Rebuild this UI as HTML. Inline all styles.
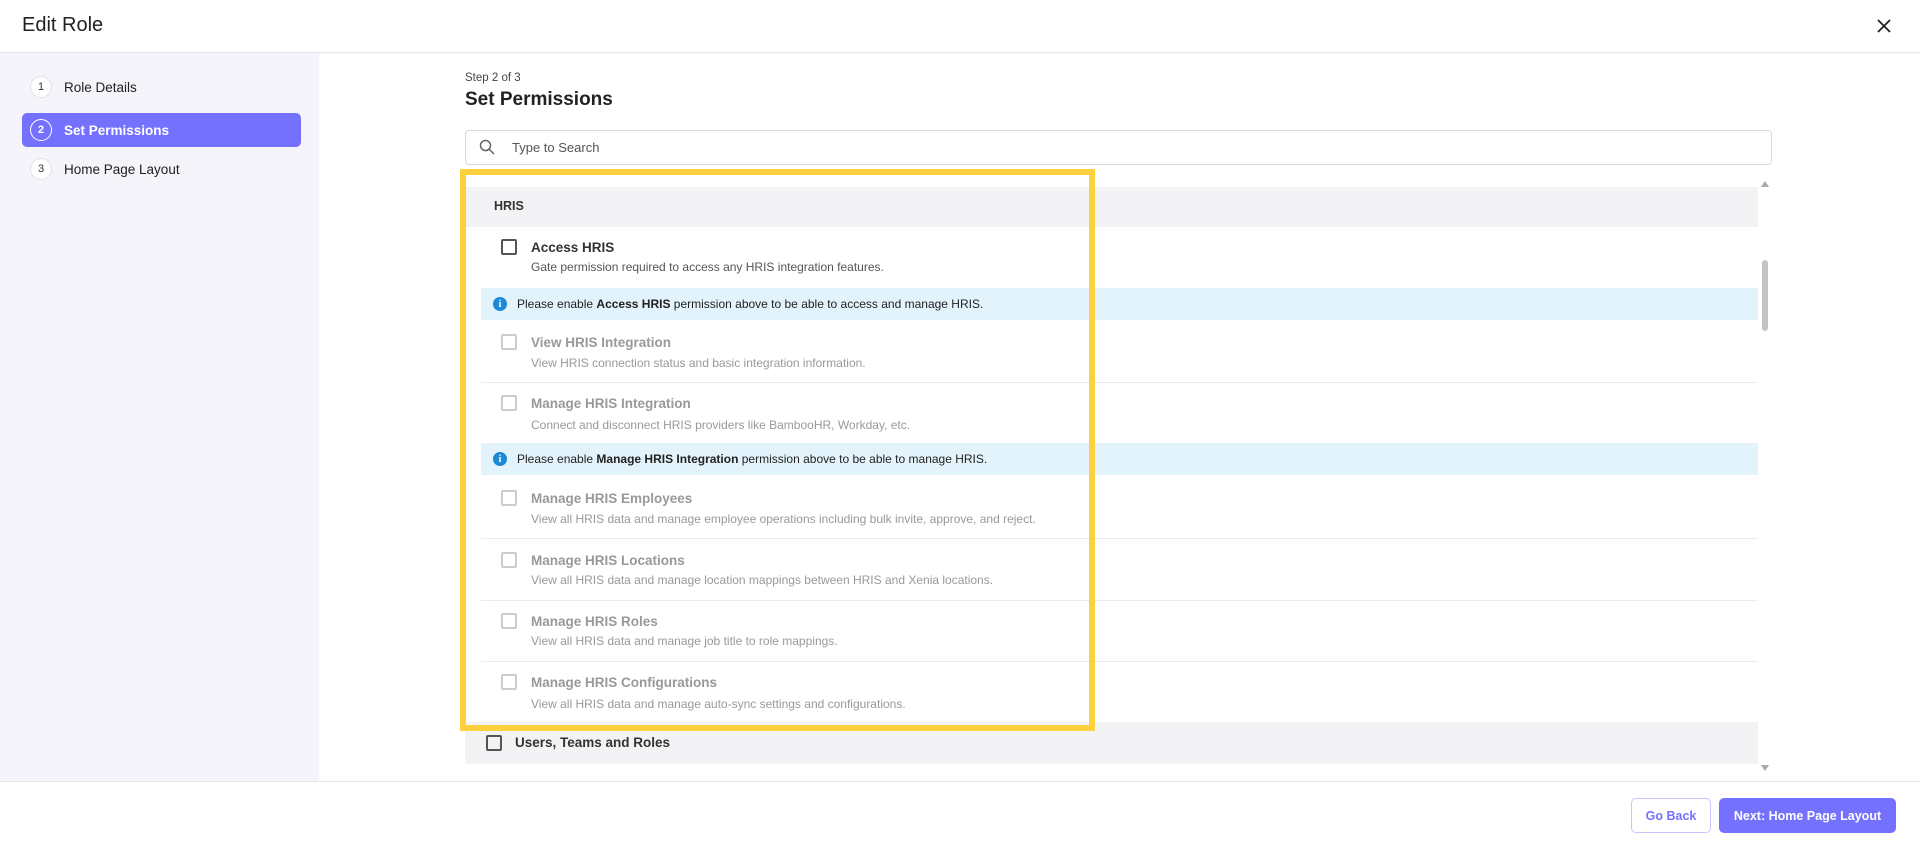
<!DOCTYPE html>
<html><head><meta charset="utf-8"><style>
*{box-sizing:border-box;margin:0;padding:0}
body{width:1920px;height:848px;overflow:hidden;background:#fff;font-family:"Liberation Sans",sans-serif;color:#212121;position:relative}
.abs{position:absolute}
.hdr{left:0;top:0;width:1920px;height:53px;border-bottom:1px solid #e6e6ea}
.side{left:0;top:53px;width:319px;height:728px;background:#f4f4fa}
.step{position:absolute;left:22px;width:279px;height:34px;display:flex;align-items:center;font-size:13.5px}
.num{width:22px;height:22px;border-radius:50%;background:#fff;border:1px solid #e0e0e6;font-size:11px;display:flex;align-items:center;justify-content:center;margin:0 12px 0 8px;color:#333}
.act{background:#7571ff;color:#fff;border-radius:5px;font-weight:bold}
.act .num{background:transparent;border:1.5px solid #fff;color:#fff;font-weight:bold}
.row{position:absolute;left:465px;width:1293px}
.cb{position:absolute;left:36px;width:16px;height:16px;border:2px solid #555;border-radius:2px}
.dis .cb{border-color:#ccc}
.t{position:absolute;left:66px;font-size:13.5px;font-weight:bold;color:#333}
.d{position:absolute;left:66px;font-size:12px;color:#555}
.dis .t{color:#999}.dis .d{color:#999}
.info{position:absolute;left:481px;width:1277px;height:32px;background:#e3f3fb;font-size:12px;display:flex;align-items:center;color:#222}
.ic{width:14px;height:14px;border-radius:50%;background:#1b8ad6;color:#fff;font-size:10px;font-weight:bold;display:flex;align-items:center;justify-content:center;margin:0 10px 0 12px;font-family:"Liberation Serif",serif}
.div{position:absolute;left:481px;width:1277px;height:1px;background:#ececf0}
</style></head><body>
<div class="abs hdr"></div>
<div class="abs" style="left:22px;top:14px;font-size:20px;color:#222">Edit Role</div>
<svg class="abs" style="left:1877px;top:19px" width="14" height="14" viewBox="0 0 14 14"><path d="M1 1L13 13M13 1L1 13" stroke="#222" stroke-width="1.8"/></svg>
<div class="abs side"></div>
<div class="step" style="top:70px"><span class="num">1</span>Role Details</div>
<div class="step act" style="top:113px"><span class="num">2</span>Set Permissions</div>
<div class="step" style="top:152px"><span class="num">3</span>Home Page Layout</div>

<div class="abs" style="left:465px;top:72px;font-size:11.5px;color:#444">Step 2 of 3</div>
<div class="abs" style="left:465px;top:89px;font-size:19px;font-weight:bold;color:#222">Set Permissions</div>
<div class="abs" style="left:465px;top:130px;width:1307px;height:35px;border:1px solid #d6d6dc;border-radius:4px"></div>
<svg class="abs" style="left:479px;top:139px" width="16" height="16" viewBox="0 0 16 16"><circle cx="6.5" cy="6.5" r="5" fill="none" stroke="#666" stroke-width="1.5"/><path d="M10.2 10.2L15 15" stroke="#666" stroke-width="1.5"/></svg>
<div class="abs" style="left:512px;top:140px;font-size:13px;color:#555">Type to Search</div>

<div class="abs" style="left:465px;top:187px;width:1293px;height:40px;background:#f3f3f6"></div>
<div class="abs" style="left:494px;top:199px;font-size:12.5px;font-weight:bold;color:#333">HRIS</div>

<div class="row" style="top:0"><div class="cb" style="top:239px"></div><div class="t" style="top:240px">Access HRIS</div><div class="d" style="top:260px">Gate permission required to access any HRIS integration features.</div></div>
<div class="info" style="top:288px"><span class="ic">i</span>Please enable&nbsp;<b>Access HRIS</b>&nbsp;permission above to be able to access and manage HRIS.</div>
<div class="row dis"><div class="cb" style="top:334px"></div><div class="t" style="top:335px">View HRIS Integration</div><div class="d" style="top:356px">View HRIS connection status and basic integration information.</div></div>
<div class="div" style="top:382px"></div>
<div class="row dis"><div class="cb" style="top:395px"></div><div class="t" style="top:396px">Manage HRIS Integration</div><div class="d" style="top:418px">Connect and disconnect HRIS providers like BambooHR, Workday, etc.</div></div>
<div class="info" style="top:443px"><span class="ic">i</span>Please enable&nbsp;<b>Manage HRIS Integration</b>&nbsp;permission above to be able to manage HRIS.</div>
<div class="row dis"><div class="cb" style="top:490px"></div><div class="t" style="top:491px">Manage HRIS Employees</div><div class="d" style="top:512px">View all HRIS data and manage employee operations including bulk invite, approve, and reject.</div></div>
<div class="div" style="top:538px"></div>
<div class="row dis"><div class="cb" style="top:552px"></div><div class="t" style="top:553px">Manage HRIS Locations</div><div class="d" style="top:573px">View all HRIS data and manage location mappings between HRIS and Xenia locations.</div></div>
<div class="div" style="top:600px"></div>
<div class="row dis"><div class="cb" style="top:613px"></div><div class="t" style="top:614px">Manage HRIS Roles</div><div class="d" style="top:634px">View all HRIS data and manage job title to role mappings.</div></div>
<div class="div" style="top:661px"></div>
<div class="row dis"><div class="cb" style="top:674px"></div><div class="t" style="top:675px">Manage HRIS Configurations</div><div class="d" style="top:697px">View all HRIS data and manage auto-sync settings and configurations.</div></div>

<div class="abs" style="left:465px;top:722px;width:1293px;height:42px;background:#f3f3f6"></div>
<div class="abs" style="left:486px;top:735px;width:16px;height:16px;border:2px solid #555;border-radius:2px"></div>
<div class="abs" style="left:515px;top:735px;font-size:13.5px;font-weight:bold;color:#333">Users, Teams and Roles</div>

<div class="abs" style="left:1761px;top:181px;width:0;height:0;border-left:4px solid transparent;border-right:4px solid transparent;border-bottom:6px solid #aaa"></div>
<div class="abs" style="left:1762px;top:260px;width:6px;height:71px;background:#c4c4c4;border-radius:3px"></div>
<div class="abs" style="left:1761px;top:765px;width:0;height:0;border-left:4px solid transparent;border-right:4px solid transparent;border-top:6px solid #aaa"></div>

<div class="abs" style="left:460px;top:169px;width:635px;height:562px;border:6px solid #fdd03f"></div>

<div class="abs" style="left:0;top:781px;width:1920px;height:1px;background:#e6e6ea"></div>
<div class="abs" style="left:1631px;top:798px;width:80px;height:35px;border:1px solid #c9c6ff;border-radius:5px;color:#7571ff;font-size:12.5px;font-weight:bold;display:flex;align-items:center;justify-content:center">Go Back</div>
<div class="abs" style="left:1719px;top:798px;width:177px;height:35px;background:#7571ff;border-radius:5px;color:#fff;font-size:12.5px;font-weight:bold;display:flex;align-items:center;justify-content:center">Next: Home Page Layout</div>
</body></html>
